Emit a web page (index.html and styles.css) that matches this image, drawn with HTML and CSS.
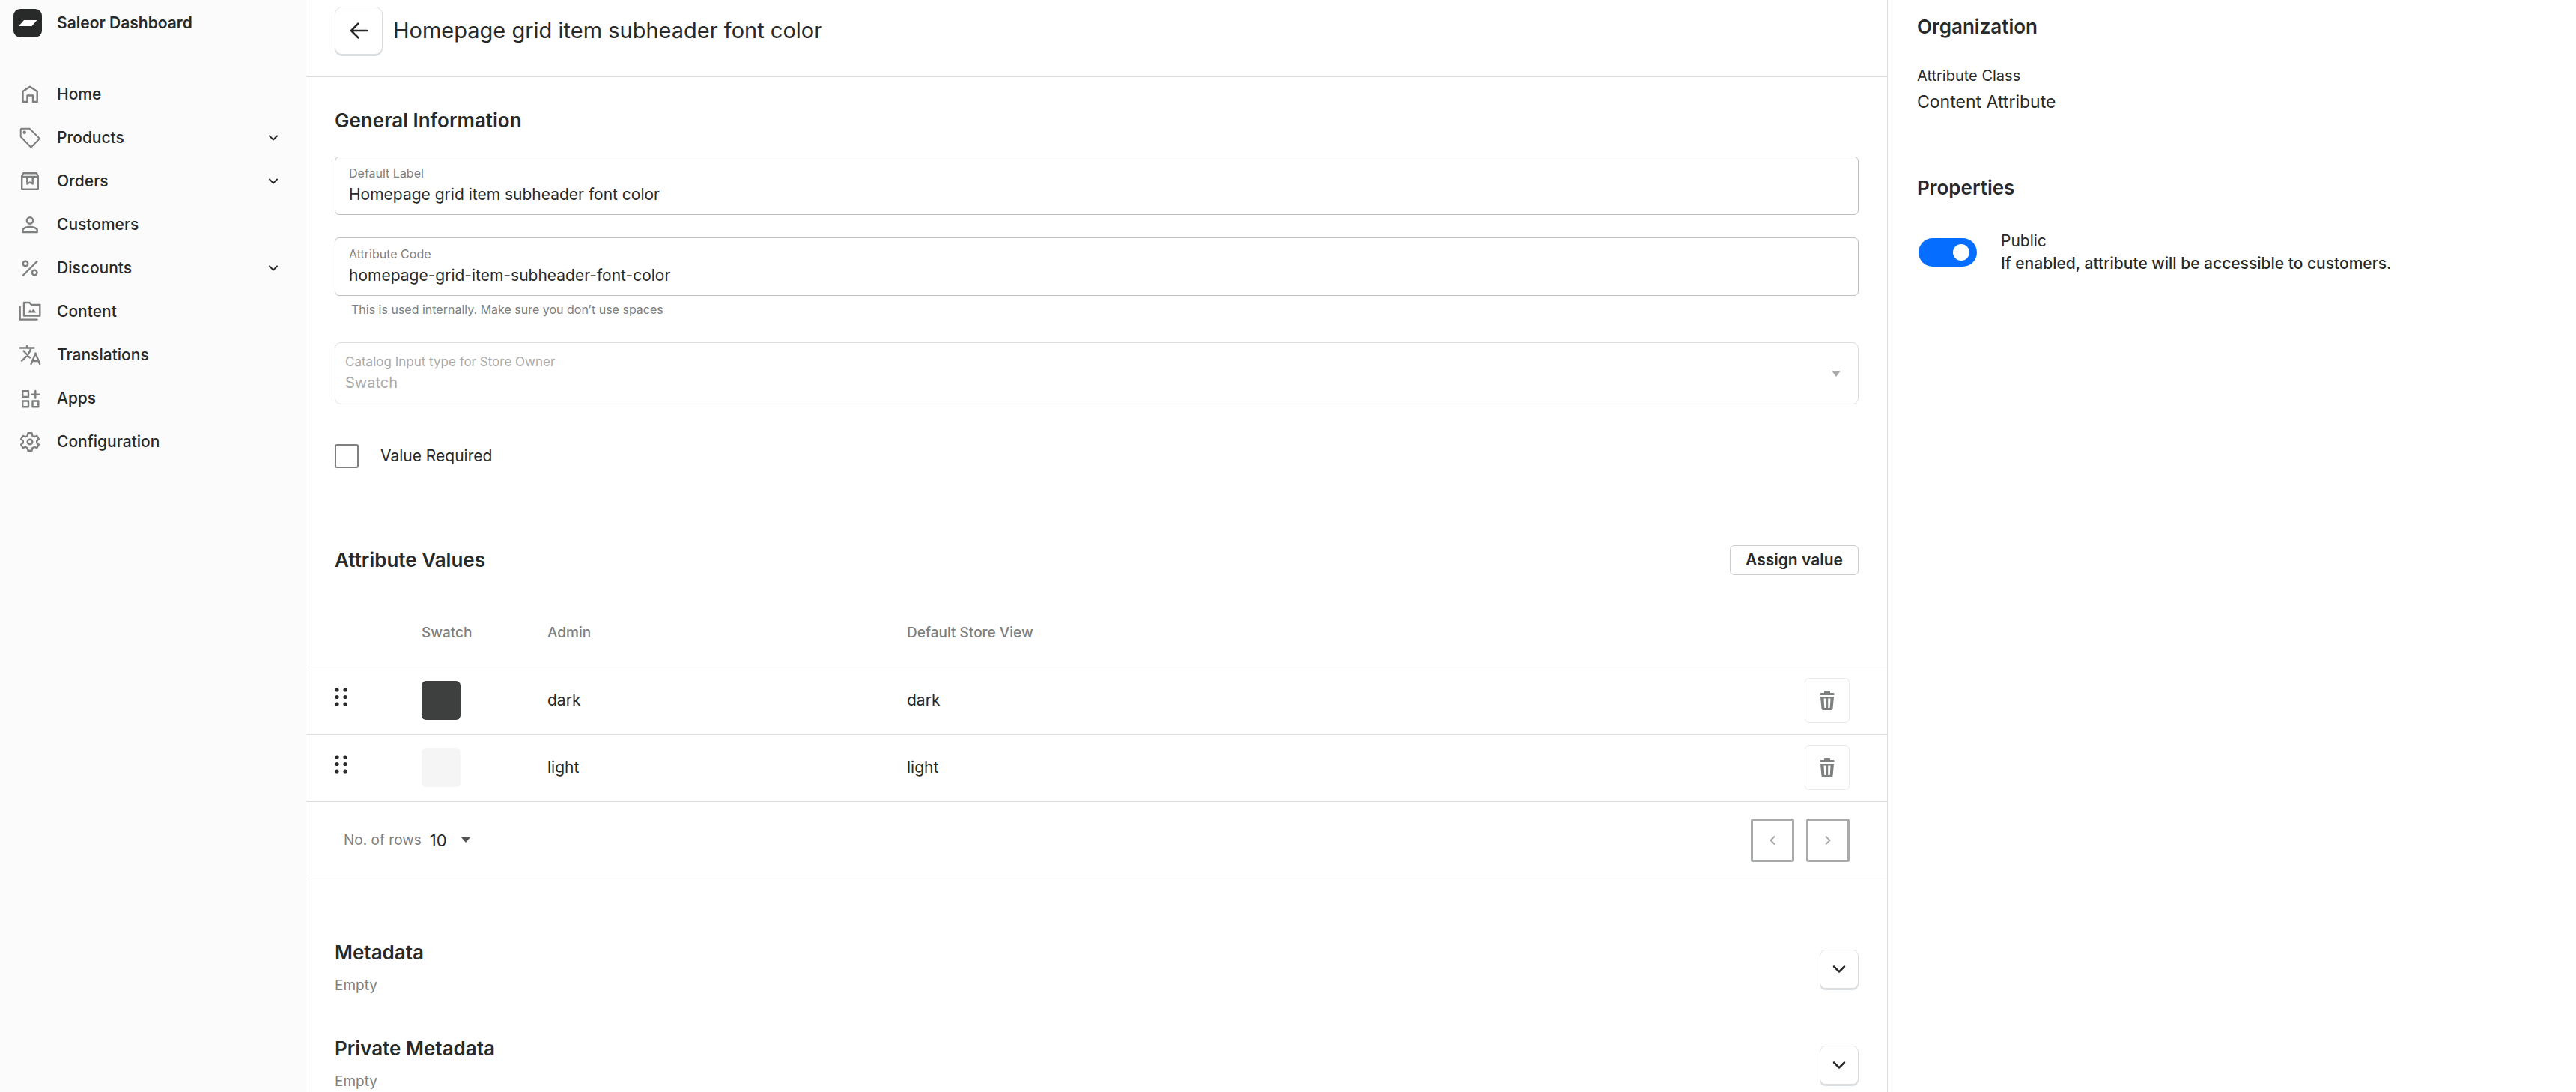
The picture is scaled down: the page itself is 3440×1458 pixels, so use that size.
FILE: index.html
```html
<!DOCTYPE html>
<html lang="en">
<head>
<meta charset="UTF-8">
<meta name="viewport" content="width=device-width, initial-scale=1.0">
<title>Saleor Dashboard</title>
<link rel="stylesheet" href="styles.css">
</head>
<body>
<div class="app">
    <aside class="sidebar">
        <a href="#" class="brand">
            <svg class="brand-logo" viewBox="0 0 38 38"><rect width="38" height="38" rx="9" fill="#282a29"/><path d="M7 23L14 15H31.500L24.500 23Z" fill="#fff"/></svg>
            <span>Saleor Dashboard</span>
        </a>
        <nav class="menu">
            <a href="#" class="menu-item">
                <svg class="menu-icon" viewBox="0 0 32 32"><path d="M6.500 12L16 5.700L25.700 12V26H20V17.500H12.500V26H6.500Z"/></svg>
                <span>Home</span>
            </a>
            <a href="#" class="menu-item">
                <svg class="menu-icon thin" viewBox="0 0 32 32"><path d="M3.700 5V14.500L16.300 27.500Q17.500 28.600 18.600 27.500L28 18Q29 17 28 16L15.500 3.700H5Q3.700 3.700 3.700 5Z"/><circle class="fill" cx="8.700" cy="8.700" r="2.200"/></svg>
                <span>Products</span>
                <svg class="menu-arrow" viewBox="0 0 14 14"><path d="M2 4.500L7 9.500L12 4.500"/></svg>
            </a>
            <a href="#" class="menu-item">
                <svg class="menu-icon" viewBox="0 0 32 32"><path d="M5.200 9L7.200 5.200H24.800L26.800 9V26.800H5.200ZM5.200 10H26.800M12.300 10V19.500L16 17.500L19.700 19.500V10"/></svg>
                <span>Orders</span>
                <svg class="menu-arrow" viewBox="0 0 14 14"><path d="M2 4.500L7 9.500L12 4.500"/></svg>
            </a>
            <a href="#" class="menu-item">
                <svg class="menu-icon" viewBox="0 0 32 32"><circle cx="16" cy="10.500" r="4.200"/><path d="M6.500 26V22.500Q9 19 16 19T25.700 22.500V26Z"/></svg>
                <span>Customers</span>
            </a>
            <a href="#" class="menu-item">
                <svg class="menu-icon" viewBox="0 0 32 32"><circle cx="10" cy="10" r="3.300"/><circle cx="22.200" cy="22" r="3.300"/><path d="M7 25.500L25.500 7"/></svg>
                <span>Discounts</span>
                <svg class="menu-arrow" viewBox="0 0 14 14"><path d="M2 4.500L7 9.500L12 4.500"/></svg>
            </a>
            <a href="#" class="menu-item">
                <svg class="menu-icon" viewBox="0 0 32 32"><path d="M8 4H15.500L18 7H29.300V21.500H8ZM2.700 10V26.600H25.500"/><path class="fill" d="M13 17.500L16 13.500L18 15.800L20.700 12.500L24.500 17.500Z"/></svg>
                <span>Content</span>
            </a>
            <a href="#" class="menu-item">
                <svg class="menu-icon" viewBox="0 0 32 32"><path d="M2.700 6.500H21.500M12 4V6.500M7.500 10.500L16 19.500M17.200 7Q15.500 15.500 5 23.500M17.500 28L23.500 13.500L29.200 28M19.200 24H27.500"/></svg>
                <span>Translations</span>
            </a>
            <a href="#" class="menu-item">
                <svg class="menu-icon" viewBox="0 0 32 32"><path d="M6.200 6.200H14V14H6.200ZM6.200 19.500H14V27.300H6.200ZM19.500 19.500H27.300V27.300H19.500ZM23.300 6V15.500M18.500 10.700H28"/></svg>
                <span>Apps</span>
            </a>
            <a href="#" class="menu-item">
                <svg class="menu-icon" viewBox="0 0 32 32"><circle cx="16" cy="16" r="3.300"/><path d="M13.500 4.200H18.500L19.300 7.800L21.800 9.200L25.400 8L27.900 12.300L25.200 14.700V17.300L27.900 19.700L25.400 24L21.800 22.800L19.300 24.200L18.500 27.800H13.500L12.700 24.200L10.200 22.800L6.600 24L4.100 19.700L6.800 17.300V14.700L4.100 12.300L6.600 8L10.200 9.200L12.700 7.800Z"/></svg>
                <span>Configuration</span>
            </a>
        </nav>
    </aside>

    <main class="content">
        <header class="topbar">
            <button type="button" class="back-button" aria-label="Back">
                <svg class="back-icon" viewBox="0 0 26 26"><path d="M24 13H3M12.500 3.500L3 13L12.500 22.500"/></svg>
            </button>
            <h1>Homepage grid item subheader font color</h1>
        </header>

        <section class="general">
            <h2>General Information</h2>
            <div class="field">
                <label for="defaultLabel">Default Label</label>
                <input type="text" id="defaultLabel" value="Homepage grid item subheader font color">
            </div>
            <div class="field">
                <label for="attributeCode">Attribute Code</label>
                <input type="text" id="attributeCode" value="homepage-grid-item-subheader-font-color">
            </div>
            <p class="hint">This is used internally. Make sure you don’t use spaces</p>
            <div class="field select-field">
                <div class="select-text">
                    <label for="inputType">Catalog Input type for Store Owner</label>
                    <select id="inputType" disabled>
                        <option>Swatch</option>
                    </select>
                </div>
                <svg class="caret" viewBox="0 0 14 8"><path d="M1 0H13L7 8Z"/></svg>
            </div>
            <div class="check-row">
                <input type="checkbox" id="valueRequired" class="checkbox">
                <label for="valueRequired">Value Required</label>
            </div>
        </section>

        <section class="values">
            <div class="values-header">
                <h2>Attribute Values</h2>
                <button type="button" class="assign-button">Assign value</button>
            </div>
            <table class="values-table">
                <thead>
                    <tr>
                        <th class="col-drag"></th>
                        <th class="col-swatch">Swatch</th>
                        <th class="col-admin">Admin</th>
                        <th>Default Store View</th>
                        <th class="col-action"></th>
                    </tr>
                </thead>
                <tbody>
                    <tr>
                        <td class="col-drag"><svg class="drag" viewBox="0 0 18 26"><circle cx="3" cy="3" r="2.600"/><circle cx="14" cy="3" r="2.600"/><circle cx="3" cy="12.500" r="2.600"/><circle cx="14" cy="12.500" r="2.600"/><circle cx="3" cy="22" r="2.600"/><circle cx="14" cy="22" r="2.600"/></svg></td>
                        <td><div class="swatch swatch-dark"></div></td>
                        <td>dark</td>
                        <td>dark</td>
                        <td class="col-action">
                            <button type="button" class="delete-button" aria-label="Delete dark"><svg class="trash" viewBox="0 0 20 28"><path fill-rule="evenodd" d="M1.500 4H6V2Q6 1 7 1H13Q14 1 14 2V4H18.500Q19.500 4 19.500 5V7H.5V5Q.5 4 1.500 4ZM1 9H19L17.500 25Q17.300 27 15.500 27H4.500Q2.700 27 2.500 25ZM5.500 11.500L6.300 24H8.800V11.500ZM11.200 11.500V24H13.700L14.500 11.500Z"/></svg></button>
                        </td>
                    </tr>
                    <tr>
                        <td class="col-drag"><svg class="drag" viewBox="0 0 18 26"><circle cx="3" cy="3" r="2.600"/><circle cx="14" cy="3" r="2.600"/><circle cx="3" cy="12.500" r="2.600"/><circle cx="14" cy="12.500" r="2.600"/><circle cx="3" cy="22" r="2.600"/><circle cx="14" cy="22" r="2.600"/></svg></td>
                        <td><div class="swatch swatch-light"></div></td>
                        <td>light</td>
                        <td>light</td>
                        <td class="col-action">
                            <button type="button" class="delete-button" aria-label="Delete light"><svg class="trash" viewBox="0 0 20 28"><path fill-rule="evenodd" d="M1.500 4H6V2Q6 1 7 1H13Q14 1 14 2V4H18.500Q19.500 4 19.500 5V7H.5V5Q.5 4 1.500 4ZM1 9H19L17.500 25Q17.300 27 15.500 27H4.500Q2.700 27 2.500 25ZM5.500 11.500L6.300 24H8.800V11.500ZM11.200 11.500V24H13.700L14.500 11.500Z"/></svg></button>
                        </td>
                    </tr>
                </tbody>
            </table>
            <div class="pagination">
                <label for="rowCount">No. of rows</label>
                <select id="rowCount" class="row-select">
                    <option>10</option>
                </select>
                <svg class="caret caret-dark" viewBox="0 0 14 8"><path d="M1 0H13L7 7Z"/></svg>
                <div class="pager">
                    <button type="button" class="page-button" aria-label="Previous page" disabled><svg class="page-icon" viewBox="0 0 14 14"><path d="M10 1.500L4.500 7L10 12.500"/></svg></button>
                    <button type="button" class="page-button" aria-label="Next page" disabled><svg class="page-icon" viewBox="0 0 14 14"><path d="M4 1.500L9.500 7L4 12.500"/></svg></button>
                </div>
            </div>
        </section>

        <section class="metadata">
            <div class="meta-block">
                <div>
                    <h2>Metadata</h2>
                    <p>Empty</p>
                </div>
                <button type="button" class="expand-button" aria-label="Expand metadata"><svg class="expand-icon" viewBox="0 0 18 18"><path d="M2 5.500L9 12.500L16 5.500"/></svg></button>
            </div>
            <div class="meta-block">
                <div>
                    <h2>Private Metadata</h2>
                    <p>Empty</p>
                </div>
                <button type="button" class="expand-button" aria-label="Expand private metadata"><svg class="expand-icon" viewBox="0 0 18 18"><path d="M2 5.500L9 12.500L16 5.500"/></svg></button>
            </div>
        </section>
    </main>

    <aside class="details">
        <h2>Organization</h2>
        <p class="details-label">Attribute Class</p>
        <p class="details-value">Content Attribute</p>
        <h2 class="details-title">Properties</h2>
        <div class="toggle-row">
            <input type="checkbox" id="public" class="toggle" checked>
            <label for="public">Public<br><strong>If enabled, attribute will be accessible to customers.</strong></label>
        </div>
    </aside>
</div>
</body>
</html>
```

FILE: styles.css
```css
* {
    box-sizing: border-box;
}

body {
    margin: 0;
    font-family: Inter, "Liberation Sans", sans-serif;
    font-size: 21px;
    line-height: 30px;
    color: #282a29;
    background-color: #fff;
}

h1, h2, p {
    margin: 0;
}

h1 {
    font-size: 29px;
    font-weight: 400;
}

h2 {
    font-size: 26px;
    font-weight: 600;
}

input, select, button {
    font: inherit;
    color: inherit;
}

svg {
    display: block;
    flex: none;
}

.app {
    display: grid;
    grid-template-columns: 409px 1fr 920px;
    min-height: 100vh;
}

/* sidebar */
.sidebar {
    background-color: #fbfbfb;
    border-right: 1px solid #dbdfe2;
    padding: 12px 36px 0 18px;
}

.brand {
    display: flex;
    align-items: center;
    gap: 20px;
    height: 38px;
    color: inherit;
    text-decoration: none;
    font-weight: 600;
}

.brand-logo {
    width: 38px;
    height: 38px;
}

.menu {
    display: flex;
    flex-direction: column;
    margin-top: 47px;
    padding-left: 6px;
}

.menu-item {
    display: flex;
    align-items: center;
    height: 58px;
    color: inherit;
    text-decoration: none;
    font-weight: 500;
}

.menu-icon {
    width: 32px;
    height: 32px;
    margin-right: 20px;
    fill: none;
    stroke: #7e7f7f;
    stroke-width: 2.4;
    stroke-linecap: round;
    stroke-linejoin: round;
}

.menu-icon.thin {
    stroke-width: 2;
}

.menu-icon .fill {
    fill: #7e7f7f;
    stroke: none;
}

.menu-arrow {
    width: 14px;
    height: 14px;
    margin-left: auto;
    fill: none;
    stroke: #282a29;
    stroke-width: 2;
    stroke-linecap: round;
    stroke-linejoin: round;
}

/* main column */
.content {
    min-width: 0;
}

.topbar {
    display: flex;
    align-items: flex-start;
    gap: 14px;
    height: 103px;
    padding: 9px 38px 0;
    border-bottom: 1px solid #dbdfe2;
}

.topbar h1 {
    line-height: 64px;
}

.back-button, .expand-button {
    display: flex;
    align-items: center;
    justify-content: center;
    padding: 0;
    background-color: #fff;
    border: 1px solid #dbdfe2;
    border-radius: 10px;
    box-shadow: 0 2px 0 #dbdfe2;
}

.back-button {
    width: 64px;
    height: 64px;
}

.back-icon {
    width: 26px;
    height: 26px;
    fill: none;
    stroke: #282a29;
    stroke-width: 2.5;
    stroke-linecap: round;
    stroke-linejoin: round;
}

.general {
    padding: 43px 38px 0;
}

.general h2 {
    margin-bottom: 33px;
}

.field {
    display: flex;
    flex-direction: column;
    height: 78px;
    margin-bottom: 30px;
    padding: 9px 18px;
    border: 1px solid #bebfbf;
    border-radius: 6px;
}

.field label {
    font-size: 16px;
    line-height: 24px;
    color: #7e7f7f;
}

.field input {
    width: 100%;
    height: 32px;
    padding: 0;
    border: 0;
    outline: 0;
    background: none;
}

.hint {
    margin: -27px 0 29px 22px;
    font-size: 16px;
    line-height: 30px;
    color: #7e7f7f;
}

.select-field {
    flex-direction: row;
    align-items: center;
    justify-content: space-between;
    height: 83px;
    margin-bottom: 53px;
    padding: 8px 22px 8px 13px;
    border-color: #dbdfe2;
    border-radius: 8px;
}

.select-text {
    display: flex;
    flex-direction: column;
    flex: 1;
    padding-bottom: 2px;
}

.select-field label {
    font-size: 17px;
    line-height: 26px;
    color: #a9aaaa;
}

select {
    appearance: none;
    padding: 0;
    border: 0;
    background: none;
}

.select-field select {
    height: 30px;
    font-size: 20px;
    color: #a9aaaa;
    opacity: 1;
}

.caret {
    width: 14px;
    height: 8px;
    fill: #a9aaaa;
}

.caret-dark {
    fill: #535554;
}

.check-row {
    display: flex;
    align-items: center;
    gap: 29px;
}

.checkbox {
    appearance: none;
    width: 32px;
    height: 32px;
    margin: 0;
    border: 2px solid #7e7f7f;
    border-radius: 3px;
}

.values {
    padding-top: 103px;
    border-bottom: 1px solid #dbdfe2;
}

.values-header {
    display: flex;
    align-items: center;
    justify-content: space-between;
    padding: 0 38px;
}

.assign-button {
    height: 40px;
    padding: 0 20px;
    border: 1px solid #cbcccc;
    border-radius: 6px;
    background-color: #fff;
    font-weight: 600;
}

.values-table {
    width: 100%;
    margin-top: 32px;
    border-collapse: collapse;
    table-layout: fixed;
}

.values-table th, .values-table td {
    height: 90px;
    padding: 0;
    border-bottom: 1px solid #dbdfe2;
    text-align: left;
    vertical-align: middle;
}

.values-table th {
    font-size: 19px;
    font-weight: 500;
    color: #7e7f7f;
}

.values-table .col-drag {
    width: 154px;
    padding-left: 38px;
}

.values-table .col-swatch {
    width: 168px;
}

.values-table .col-admin {
    width: 480px;
}

.values-table .col-action {
    width: 160px;
    padding-right: 50px;
}

.drag {
    width: 18px;
    height: 26px;
    margin-bottom: 8px;
    fill: #282a29;
}

.swatch {
    width: 52px;
    height: 52px;
    border-radius: 6px;
}

.swatch-dark {
    background-color: #3e403f;
}

.swatch-light {
    background-color: #f5f5f5;
}

.delete-button {
    display: flex;
    align-items: center;
    justify-content: center;
    width: 60px;
    height: 60px;
    margin-left: auto;
    padding: 0;
    border: 1px solid #eaeaea;
    border-radius: 6px;
    background-color: #fff;
}

.trash {
    width: 20px;
    height: 28px;
    fill: #7e7f7f;
}

.pagination {
    display: flex;
    align-items: center;
    height: 102px;
    padding: 0 50px;
}

.pagination label {
    margin-right: 11px;
    font-size: 19px;
    color: #7e7f7f;
}

.row-select {
    width: 41px;
    font-size: 22px;
}

.pager {
    display: flex;
    gap: 16px;
    margin-left: auto;
}

.page-button {
    display: flex;
    align-items: center;
    justify-content: center;
    width: 58px;
    height: 58px;
    padding: 0;
    border: 3px solid #a9aaaa;
    border-radius: 3px;
    background-color: #fff;
}

.page-icon {
    width: 14px;
    height: 14px;
    fill: none;
    stroke: #a9aaaa;
    stroke-width: 2;
}

.metadata {
    display: flex;
    flex-direction: column;
    gap: 54px;
    padding: 83px 38px 0;
}

.meta-block {
    display: flex;
    align-items: center;
    justify-content: space-between;
}

.meta-block p {
    margin-top: 14px;
    font-size: 19px;
    color: #7e7f7f;
}

.expand-button {
    width: 52px;
    height: 52px;
    border-radius: 8px;
}

.expand-icon {
    width: 18px;
    height: 18px;
    fill: none;
    stroke: #282a29;
    stroke-width: 2.5;
    stroke-linecap: round;
    stroke-linejoin: round;
}

/* right column */
.details {
    padding: 21px 40px 0 39px;
    border-left: 1px solid #dbdfe2;
}

.details-label {
    margin-top: 35px;
    font-size: 20px;
}

.details-value {
    margin-top: 5px;
    font-size: 23px;
}

.details-title {
    margin-top: 85px;
}

.toggle-row {
    display: flex;
    align-items: center;
    gap: 32px;
    margin-top: 41px;
    padding-left: 2px;
}

.toggle-row strong {
    font-weight: 500;
}

.toggle {
    appearance: none;
    display: flex;
    align-items: center;
    justify-content: flex-end;
    flex: none;
    width: 78px;
    height: 38px;
    margin: 0;
    padding: 0 10px;
    border-radius: 19px;
    background-color: #056dff;
}

.toggle::before {
    content: "";
    width: 22px;
    height: 22px;
    border-radius: 50%;
    background-color: #fff;
}
```
